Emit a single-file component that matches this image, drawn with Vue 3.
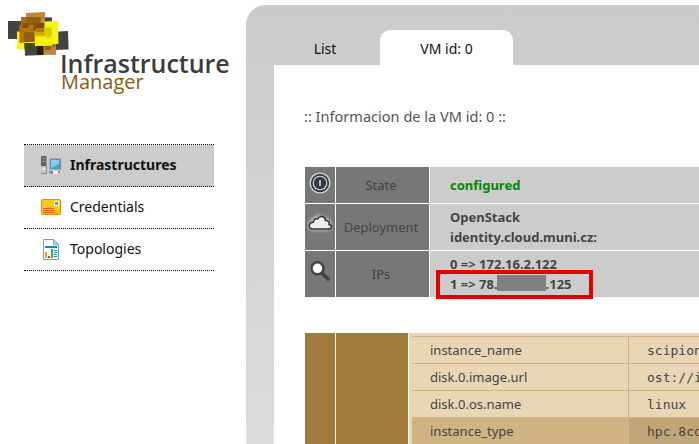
<script setup>
const menu = [
  { label: 'Infrastructures', icon: 'pc', active: true },
  { label: 'Credentials', icon: 'card' },
  { label: 'Topologies', icon: 'report' },
]
const specs = [
  ['instance_name', 'scipion-cloud'],
  ['disk.0.image.url', 'ost://identity.cloud.muni.cz'],
  ['disk.0.os.name', 'linux'],
  ['instance_type', 'hpc.8core-32ram'],
]
</script>

<template>
  <div class="page">
    <aside class="side">
      <div class="logo">
        <svg class="mark" width="72" height="48" viewBox="0 0 72 48">
          <path fill="#444" d="M8 11h19v18H8zM40 7l12 .5V13H40zM50 22l18-1 .6 18.500-18.600.5z" />
          <path fill="#f8f51d" d="M17 21.500h18v18H17z" />
          <path fill="#444" d="M24.500 33H43v12l-18 .7z" />
          <path fill="#454615" d="M24.500 33h10.500v6.500H24.500z" />
          <path fill="#bb853c" d="M37 30h19v14.800l-19 .2z" />
          <path fill="#2b1d06" d="M37 35h6.500v10H37z" />
          <path fill="#965908" d="M45 30h9.500v6.500h-4V40H45z" />
          <path fill="#bd873f" d="M26 3l19-1v19H26z" />
          <path fill="#aa6a13" d="M21 7h20v12H21z" />
          <path fill="#b57208" d="M19.500 15L40 13v18l-20.500 2z" />
          <path fill="#985d0b" d="M26 7h14v8H26zM24 22h10.500v10H24z" />
          <path fill="#855009" d="M33.500 13.500h7v7h-7zM22.500 13h6v5h-6z" />
          <path fill="#7a4d05" d="M40 13h5v5h-5z" />
          <path fill="#f8f51d" d="M44.500 11.500l13.500-.5.5 23h-14z" />
          <path fill="#e8dc09" d="M34.500 22l17.500-1 .5 14.500-17.500.7z" />
          <path fill="#f4f106" d="M35 27h17.500v8.500H35z" />
          <path fill="#cfaa0b" d="M34.500 20.500H46v5H34.500z" />
          <path fill="#b77b0b" d="M36 18h8v4h-8z" />
          <path fill="#d5cb09" d="M44.500 17.500h7v7h-7zM47 24h3v4h-3z" />
        </svg>
        <div class="brand">Infrastructure</div>
        <div class="sub">Manager</div>
      </div>
      <nav>
        <a v-for="m in menu" :key="m.label" :class="['item', { active: m.active }]">
          <svg v-if="m.icon === 'pc'" width="22" height="22" viewBox="0 0 22 22">
            <path fill="#606466" d="M1 1h6v10H1z" /><path fill="#c6c6c6" d="M1 11h6v8H1z" />
            <path fill="#8b9092" d="M6 1h1v18H6zM1 18h6v1H1zM2 3h4v1H2zM2 6h4v1H2z" />
            <path fill="#eee" d="M3 13h2v2H3z" />
            <rect x="9" y="3" width="12" height="12" fill="#a9adaf" />
            <path fill="#4b9dcb" d="M10 4h10v10H10z" /><path fill="#8dcbea" d="M11 5h8v4l-8 4z" />
            <path fill="#84898b" d="M20 4h1v11h-1zM9 16h11v2h-2v1h-7v-1H9z" />
            <path fill="#eee" d="M13 16h5v3h-5z" />
          </svg>
          <svg v-else-if="m.icon === 'card'" width="22" height="22" viewBox="0 0 22 22">
            <rect x="1.500" y="2.500" width="19" height="15" rx="1" fill="#ffc91b" stroke="#e88b0b" />
            <path fill="#f8a70b" d="M2 13h18v4H2z" opacity=".55" />
            <path fill="#d9620a" d="M3 11h11v1H3zM3 13h11v1H3zM3 15h11v1H3z" />
            <path fill="#e7f2f5" d="M14 4h5v5h-5z" /><path fill="#49a5d7" d="M15 5h3v3h-3z" />
          </svg>
          <svg v-else width="22" height="22" viewBox="0 0 22 22">
            <path fill="#fbfdff" stroke="#75a4b8" d="M3.500.5h10l5 5v15h-15z" />
            <path fill="#b7d4df" stroke="#6192a8" stroke-width=".7" d="M13.500.5v5h5z" />
            <path fill="#1a82c6" d="M5 7h12v2H5zM14 11h3v1h-3zM14 13h3v1h-3zM14 15h3v1h-3zM14 17h3v1h-3z" />
            <path fill="#f5a21e" d="M5 13h2v6H5z" /><path fill="#e32522" d="M8 17h2v2H8z" /><path fill="#28b938" d="M11 10h2v9h-2z" />
          </svg>
          <span>{{ m.label }}</span>
        </a>
      </nav>
    </aside>

    <main class="main">
      <div class="tabs">
        <span class="tab list">List</span>
        <span class="tab current">VM id: 0</span>
      </div>
      <section class="content">
        <h1>:: Informacion de la VM id: 0 ::</h1>
        <div class="info">
          <div class="ic">
            <svg width="22" height="22" viewBox="0 0 22 22">
              <circle cx="11" cy="11" r="10.500" fill="#d5d9df" /><circle cx="11" cy="11" r="9.200" fill="#383b43" />
              <circle cx="11" cy="11" r="7.300" fill="#e2e4e8" /><circle cx="11" cy="11" r="6.200" fill="#383b43" />
              <path d="M11 8v6" stroke="#eee" stroke-width="1.400" />
            </svg>
          </div>
          <div class="key">State</div>
          <div class="val ok">configured</div>
          <div class="ic cloud">
            <svg width="26" height="24" viewBox="0 0 26 24">
              <defs><filter id="glow" x="-30%" y="-40%" width="160%" height="180%"><feGaussianBlur stdDeviation="2" /></filter></defs>
              <path fill="#ddd" stroke="#ccc" stroke-width="2" filter="url(#glow)" d="M6 18a4 4 0 0 1 0-8c1-5 9-6 11-1 4-1 6 2 5 4 3 2 1 5-1 5z" />
              <path fill="#eee" stroke="#333" stroke-width="1.500" d="M6 18c-5 0-5-6.500.3-6.800C7 8 9 7.500 10.500 8c2-4 7.500-3 8 1.500 3.500 0 4 2.500 3.500 4 3.500.5 3 4.500-.5 4.500z" />
            </svg>
          </div>
          <div class="key">Deployment</div>
          <div class="val">OpenStack<br>identity.cloud.muni.cz:</div>
          <div class="ic search">
            <svg width="22" height="22" viewBox="0 0 22 22">
              <path d="M13.500 13.500l5.500 5.500" stroke="#444" stroke-width="3.600" stroke-linecap="round" />
              <circle cx="8.500" cy="8.300" r="6" fill="#fff" stroke="#444" stroke-width="2.500" />
            </svg>
          </div>
          <div class="key">IPs</div>
          <div class="val">
            0 =&gt; 172.16.2.122
            <div class="ip">1 =&gt; 78.<i class="mask"></i>.125<b class="box"></b></div>
          </div>
        </div>
        <div class="details">
          <div class="brown"></div>
          <div class="brown"></div>
          <div class="specs">
            <div v-for="(s, i) in specs" :key="s[0]" :class="['spec', { hot: i === 3 }]">
              <span class="name">{{ s[0] }}</span><code>{{ s[1] }}</code>
            </div>
          </div>
        </div>
      </section>
    </main>
  </div>
</template>

<style>
body { margin: 0; overflow: hidden; }
</style>
<style scoped>
* { box-sizing: border-box; }
.page { display: flex; width: 699px; height: 444px; overflow: hidden; background: #fff; font: 14px/20px "Noto Sans", sans-serif; color: #111; }
.side { width: 246px; flex: none; }
.logo { height: 144px; padding-top: 48px; position: relative; white-space: nowrap; font-family: "Open Sans", sans-serif; }
.mark { position: absolute; left: 0; top: 10px; }
.brand { position: relative; padding-left: 60px; font-size: 25px; line-height: 30px; font-weight: 600; color: #3c3c3e; letter-spacing: -.02px; }
.sub { position: relative; padding-left: 61px; margin-top: -8px; font-size: 20px; line-height: 24px; color: #8b5a14; }
nav { width: 190px; margin-left: 24px; border-top: 1px dotted #000; }
.item { display: flex; align-items: center; height: 42px; padding-left: 16px; gap: 8px; border-bottom: 1px dotted #000; }
.item span { padding-bottom: 2px; }
.active { background: #ccc; font-weight: 700; }
.main { width: 460px; flex: none; margin-top: 5px; padding: 25px 0 0 28px; border-radius: 20px 0 0 0; background: linear-gradient(#cbcbcb, #ddd); }
.tabs { display: flex; height: 35px; }
.tab { text-align: center; padding-top: 9px; }
.list { width: 106px; padding-right: 4px; }
.current { width: 133px; background: #fff; border-radius: 10px 10px 0 0; }
.content { height: 379px; background: #fff; padding: 41px 0 0 31px; }
h1 { margin: 0 0 0 -1px; font-size: 14.56px; line-height: 20px; font-weight: 400; color: #555; }
.info { margin-top: 41px; display: grid; grid-template-columns: 30px 93px 1fr; grid-template-rows: 36px 46px 46px; gap: 1px; font-size: 13px; color: #444; }
.ic, .key { background: #777; display: flex; justify-content: center; align-items: center; }
.key { padding-right: 3px; }
.ic { align-items: flex-start; padding-top: 5px; }
.ic.cloud { padding-top: 7px; }
.ic.search { padding-top: 9px; }
.val { background: #ccc; padding: 3px 0 0 20px; font-weight: 700; }
.ok { color: #080; padding-top: 8px; }
.ip { display: flex; position: relative; white-space: pre; }
.mask { width: 49px; height: 16px; margin: 1px 0 0 -1px; background: #808080; }
.box { position: absolute; left: -14px; top: -4px; width: 157px; height: 29px; border: 4px solid #e20000; }
.details { margin-top: 36px; height: 130px; display: grid; grid-template-columns: 30px 72px 1fr; gap: 1px; }
.brown { background: #a07b3b; }
.specs { background: #e8d6b4; padding: 3px 0 0 3px; }
.spec { display: grid; grid-template-columns: 217px 1fr; height: 27px; border-top: 1px solid #cfb383; line-height: 27px; font-size: 13px; color: #444; overflow: hidden; white-space: nowrap; }
.name { padding-left: 18px; border-right: 1px solid #cfb383; }
code { padding-left: 18px; font: 13px/27px "DejaVu Sans Mono", monospace; }
.hot { background: #cfb383; }
.hot code { background: #bfa577; }
</style>
